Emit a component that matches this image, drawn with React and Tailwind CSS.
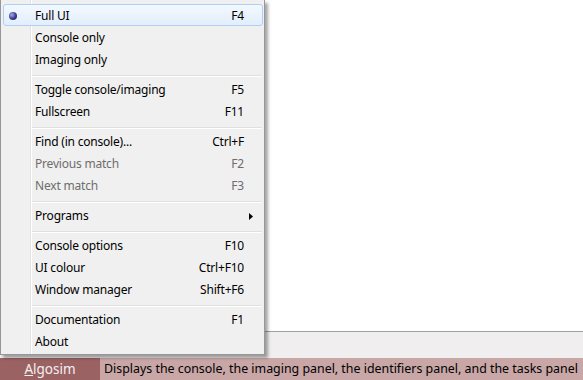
import React from "react";

const font = { fontFamily: '"Noto Sans", "Open Sans", sans-serif' };

const groups = [
  [
    { label: "Full UI", key: "F4", checked: true },
    { label: "Console only" },
    { label: "Imaging only" },
  ],
  [
    { label: "Toggle console/imaging", key: "F5" },
    { label: "Fullscreen", key: "F11" },
  ],
  [
    { label: "Find (in console)...", key: "Ctrl+F" },
    { label: "Previous match", key: "F2", disabled: true },
    { label: "Next match", key: "F3", disabled: true },
  ],
  [{ label: "Programs", sub: true }],
  [
    { label: "Console options", key: "F10" },
    { label: "UI colour", key: "Ctrl+F10" },
    { label: "Window manager", key: "Shift+F6" },
  ],
  [{ label: "Documentation", key: "F1" }, { label: "About" }],
];

function Item({ item }) {
  const color = item.disabled ? "text-[#6d6d6d]" : "text-[#000]";
  return (
    <div className="relative z-10 h-[22px] pl-[2px] pr-[1px]">
      <div
        className={
          "flex h-full items-center rounded-[3px] border pt-[2px] " +
          (item.checked
            ? "border-[#aecff7] bg-gradient-to-b from-[#f2f8fe] to-[#e3eefc]"
            : "border-transparent")
        }
      >
        <div className="flex w-[31px] items-center pl-[5px]">
          {item.checked && (
            <span className="block h-[8px] w-[8px] rounded-full bg-[radial-gradient(circle_at_35%_35%,#a8a8e8,#3a3a8a_55%,#1c1c5c)]" />
          )}
        </div>
        <span className={"text-[12px] leading-none tracking-[-0.2px] " + color}>{item.label}</span>
        <span className="flex-1" />
        {item.key && (
          <span className={"mr-[18px] text-[12px] leading-none tracking-[-0.2px] " + color}>{item.key}</span>
        )}
        {item.sub && (
          <svg width="4" height="7" viewBox="0 0 4 7" className="mr-[9px]">
            <path d="M0 0 L4 3.5 L0 7 Z" fill="#000" />
          </svg>
        )}
      </div>
    </div>
  );
}

function Separator() {
  return (
    <div className="h-[8px] pl-[30px] pr-[2px] pt-[5px]">
      <div className="h-px bg-[#e0e0e0]" />
      <div className="h-px bg-white" />
    </div>
  );
}

export default function App() {
  return (
    <div className="relative flex h-[380px] w-[583px] flex-col overflow-hidden bg-white" style={font}>
      <div className="h-[331px] shrink-0 bg-white" />
      <div className="h-px shrink-0 bg-[#a0a0a0]" />
      <div className="h-[26px] shrink-0 bg-[#f0eeee]" />
      <div className="flex h-[22px] shrink-0 items-center">
        <div className="flex h-full w-[100px] shrink-0 items-center justify-center bg-[#9a6262] text-[13.5px] text-[#f4f0f0]">
          <span>
            <span className="underline">A</span>lgosim
          </span>
        </div>
        <div className="flex h-full min-w-0 flex-1 items-center overflow-hidden whitespace-nowrap bg-[#c9a7a7] pl-[4px] text-[12.4px] text-[#000]">
          Displays the console, the imaging panel, the identifiers panel, and the tasks panel
        </div>
      </div>

      <div className="absolute left-0 top-0 w-[265px] border-b border-l border-r border-[#979797] bg-[#f0f0f0] pb-[2px] pt-[4px] shadow-[3px_3px_3px_rgba(0,0,0,0.35)]">
        <div className="absolute bottom-0 left-[29px] top-0 flex">
          <div className="w-px bg-[#e2e3e3]" />
          <div className="w-px bg-white" />
        </div>
        {groups.map((g, gi) => (
          <React.Fragment key={gi}>
            {gi > 0 && <Separator />}
            {g.map((it) => (
              <Item key={it.label} item={it} />
            ))}
          </React.Fragment>
        ))}
      </div>
    </div>
  );
}
